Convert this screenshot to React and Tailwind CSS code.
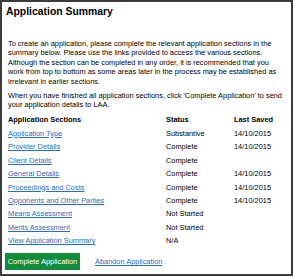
const sections = [
  { name: "Application Type", status: "Substantive", saved: "14/10/2015" },
  { name: "Provider Details", status: "Complete", saved: "14/10/2015" },
  { name: "Client Details", status: "Complete", saved: "" },
  { name: "General Details", status: "Complete", saved: "14/10/2015" },
  { name: "Proceedings and Costs", status: "Complete", saved: "14/10/2015" },
  { name: "Opponents and Other Parties", status: "Complete", saved: "14/10/2015" },
  { name: "Means Assessment", status: "Not Started", saved: "" },
  { name: "Merits Assessment", status: "Not Started", saved: "" },
  { name: "View Application Summary", status: "N/A", saved: "" },
];

export default function App() {
  return (
    <div className="w-[293px] h-[276px] border-2 border-[#3c3c3c] bg-white text-black font-['Liberation_Sans',Arial,sans-serif]">
      {/* Page title */}
      <h1 className="px-[4px] pt-[4px] text-[10.4px] leading-[12px] font-bold">
        Application Summary
      </h1>

      {/* Intro copy */}
      <div className="px-[6px] pt-[21px] text-[7.4px] leading-[9.4px]">
        <p>
          To create an application, please complete the relevant application sections in the
          summary below. Please use the links provided to access the various sections.
          Although the section can be completed in any order, it is recommended that you
          work from top to bottom as some areas later in the process may be established as
          irrelevant in earlier sections.
        </p>
        <p className="mt-[5px]">
          When you have finished all application sections, click 'Complete Application' to send
          your application details to LAA.
        </p>
      </div>

      {/* Sections table */}
      <div className="px-[6px] pt-[3px] text-[7.4px]">
        <div className="grid grid-cols-[158px_68px_1fr] h-[14px] items-center font-bold">
          <span>Application Sections</span>
          <span>Status</span>
          <span>Last Saved</span>
        </div>
        {sections.map((s) => (
          <div key={s.name} className="grid grid-cols-[158px_68px_1fr] h-[13.4px] items-center">
            <a href="#" className="text-[#2c6bb8] underline">{s.name}</a>
            <span>{s.status}</span>
            <span>{s.saved}</span>
          </div>
        ))}
      </div>

      {/* Actions */}
      <div className="flex items-center gap-[15px] px-[3px] pt-[6px] text-[7.4px]">
        <button className="h-[17px] w-[75px] bg-[#138a3c] text-white">Complete Application</button>
        <a href="#" className="text-[#2c6bb8] underline">Abandon Application</a>
      </div>
    </div>
  );
}
